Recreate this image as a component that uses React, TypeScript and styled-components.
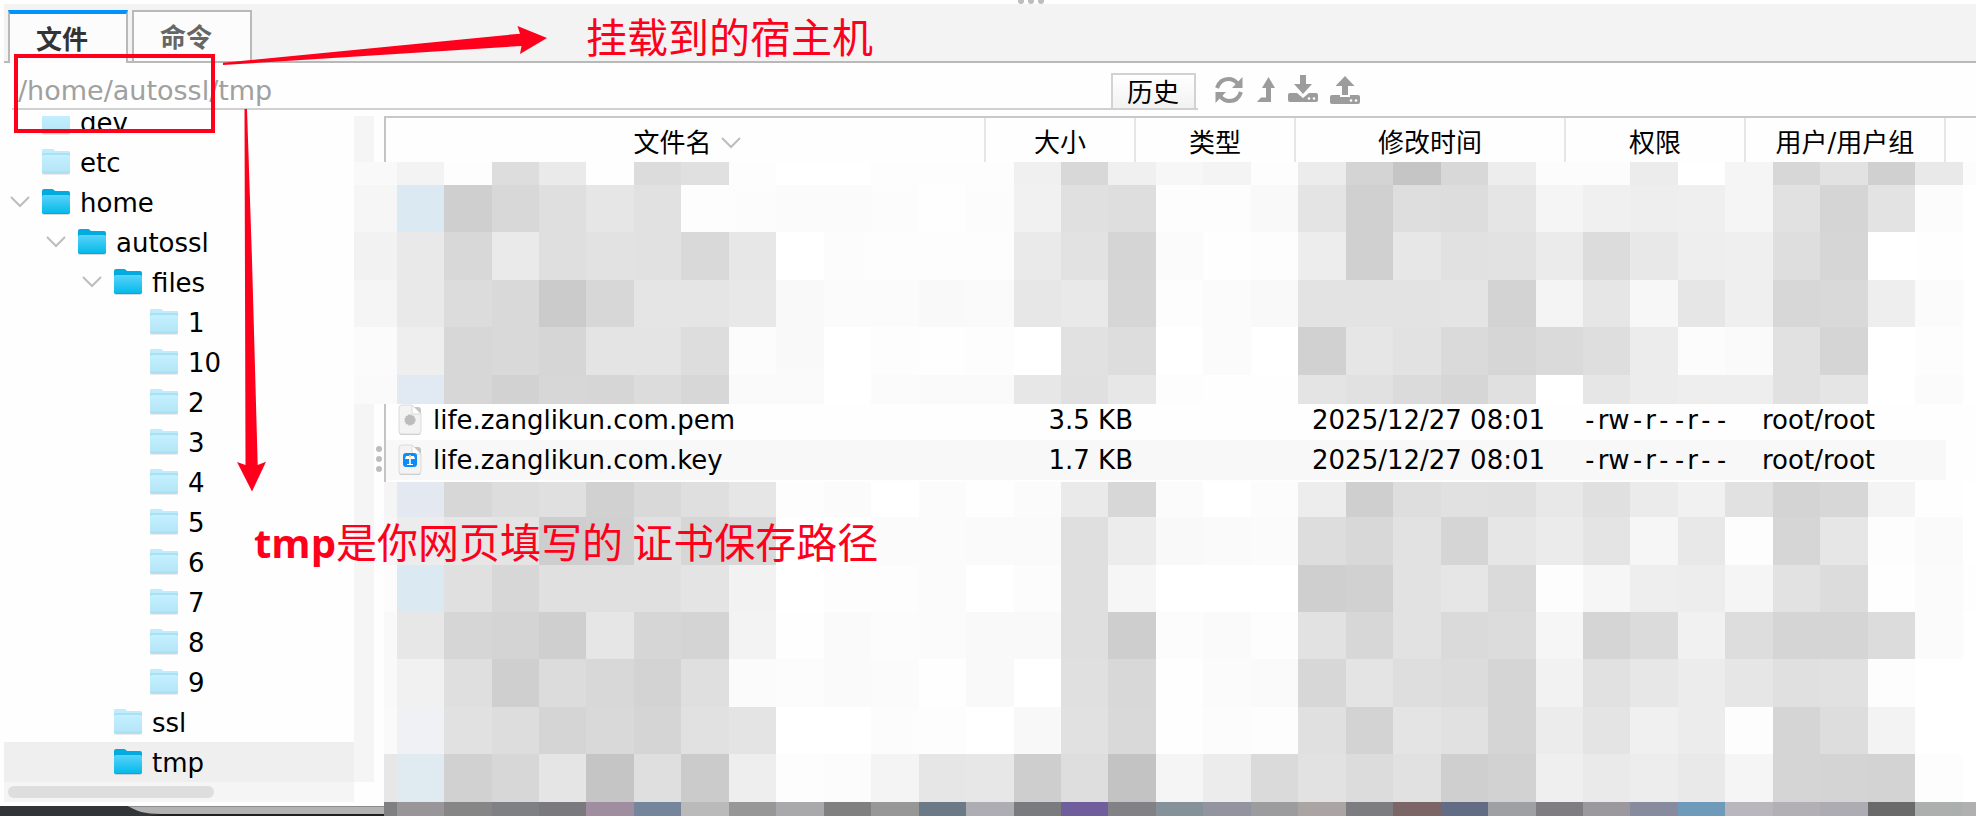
import React from "react";
import styled, { createGlobalStyle } from "styled-components";

const SANS = '"DejaVu Sans", "Noto Sans CJK SC", sans-serif';
const RED = "#ff001c";

const GlobalStyle = createGlobalStyle`
  *, *::before, *::after { box-sizing: border-box; }
  body { margin: 0; background: #fefefe; overflow-x: hidden; }
  button, input { font: inherit; color: inherit; margin: 0; }
`;

const Page = styled.div`
  position: relative;
  display: flex;
  flex-direction: column;
  min-height: 100vh;
  overflow: hidden;
  font-family: ${SANS};
  font-size: 26px;
  color: #000;
`;

const TopSplitter = styled.div`
  display: flex;
  justify-content: center;
  height: 4px;
  padding-left: 86px;
`;

const TabBar = styled.div`
  display: flex;
  gap: 4px;
  height: 59px;
  margin-left: 4px;
  padding: 6px 4px 0;
  background: #f3f3f3;
  border-bottom: 2px solid #b9b9b9;
`;

const Tab = styled.button<{ $active?: boolean }>`
  width: 120px;
  height: ${(p) => (p.$active ? 53 : 51)}px;
  padding: 0 12px 2px 0;
  border: 2px solid #b9b9b9;
  border-top: ${(p) => (p.$active ? "4px solid #0093ff" : "2px solid #b9b9b9")};
  border-bottom: 0;
  background: #fcfcfc;
  font-family: "Noto Sans CJK SC", sans-serif;
  font-weight: 700;
  color: ${(p) => (p.$active ? "#333" : "#666")};
`;

const PathBar = styled.div`
  display: flex;
  height: 53px;
  padding-bottom: 6px;
`;

const PathField = styled.div`
  display: flex;
  align-items: flex-end;
  width: 60%;
  margin-left: 12px;
  padding-right: 2px;
  border-bottom: 2px solid #d0d0d0;
`;

const PathInput = styled.input`
  flex: 1;
  min-width: 0;
  height: 36px;
  padding: 0 6px;
  border: 0;
  outline: 0;
  background: transparent;
  font-size: 27px;
  color: #a0a0a0;
`;

const HistoryButton = styled.button`
  width: 85px;
  height: 35px;
  padding: 2px 0 0;
  border: 2px solid #d2d2d2;
  border-bottom: 0;
  background: linear-gradient(#fff, #f2f2f2);
  line-height: 32px;
`;

const Tools = styled.div`
  display: flex;
  align-items: center;
  gap: 12px;
  padding: 6px 0 0 16px;
`;

const ToolButton = styled.button`
  display: flex;
  padding: 0;
  border: 0;
  background: none;
  color: #9c9c9c;
`;

const Body = styled.div`
  display: flex;
  flex: 1;
`;

const Side = styled.aside`
  display: flex;
  flex-direction: column;
  flex: none;
  width: 384px;
`;

const SideMain = styled.div`
  display: flex;
  height: 690px;
  padding-left: 4px;
`;

const TreePane = styled.div`
  width: 350px;
`;

const Tree = styled.ul`
  display: flex;
  flex-direction: column;
  justify-content: flex-end;
  height: 666px;
  margin: 0;
  padding: 0;
  overflow: hidden;
  list-style: none;
`;

const TreeItem = styled.li<{ $depth: number; $selected?: boolean }>`
  display: flex;
  flex: none;
  align-items: center;
  height: 40px;
  padding-left: ${(p) => p.$depth * 36 - 30}px;
  background: ${(p) => (p.$selected ? "#efefef" : "transparent")};
`;

const Toggle = styled.span`
  display: flex;
  flex: none;
  width: 32px;
`;

const TreeLabel = styled.span`
  padding: 2px 0 0 10px;
`;

const HScroll = styled.div`
  height: 20px;
  padding: 4px;
  background: #f5f5f5;
`;

const Thumb = styled.div`
  width: 206px;
  height: 12px;
  border-radius: 6px;
  background: #dedede;
`;

const Gutter = styled.div`
  width: 20px;
  height: 666px;
  background: #f5f5f5;
`;

const Splitter = styled.div`
  display: flex;
  align-items: center;
  justify-content: center;
  width: 10px;
  height: 686px;
`;

const FilePane = styled.main`
  flex: 1;
  min-width: 0;
  border-top: 2px solid #c8c8c8;
  border-left: 2px solid #c4c4c4;
`;

const FileTable = styled.table`
  width: 100%;
  table-layout: fixed;
  border-collapse: separate;
  border-spacing: 0;
  white-space: nowrap;
`;

const Col = styled.col<{ $width?: number }>`
  width: ${(p) => (p.$width ? `${p.$width}px` : "auto")};
`;

const HeadCell = styled.th`
  height: 44px;
  padding: 6px 0 0;
  border-right: 2px solid #e6e6e6;
  font-weight: 400;
  line-height: 38px;

  &:last-child { border-right: 0; }
`;

const HeadLabel = styled.span`
  display: flex;
  align-items: center;
  justify-content: center;
  gap: 9px;
  padding-left: 4px;
`;

const FileRow = styled.tr<{ $striped?: boolean }>`
  td:not(:last-child) {
    background: ${(p) => (p.$striped ? "#f8f8f8" : "transparent")};
  }
`;

const Cell = styled.td<{ $align?: "right" }>`
  height: 40px;
  padding: ${(p) => (p.$align === "right" ? "0 3px 0 0" : "0 0 0 16px")};
  text-align: ${(p) => p.$align ?? "left"};
  line-height: 40px;
`;

const FileName = styled.div`
  display: flex;
  align-items: center;
  gap: 11px;
  margin-left: -4px;
`;

const Dash = styled.span`
  font-family: "DejaVu Sans Mono", monospace;
`;

const CoverCell = styled.td<{ $top?: number }>`
  position: relative;
  z-index: 1;
  padding: ${(p) => p.$top ?? 0}px 0 0;
`;

const Mosaic = styled.svg<{ $bleed: number; $overlap?: number }>`
  display: block;
  width: calc(100% + ${(p) => p.$bleed}px);
  margin-left: -${(p) => p.$bleed}px;
  margin-bottom: -${(p) => p.$overlap ?? 0}px;
`;

const Notes = styled.div`
  position: absolute;
  inset: 0;
  z-index: 5;
  pointer-events: none;
  color: ${RED};
`;

const NoteArt = styled.svg`
  position: absolute;
  left: 0;
  top: 0;
`;

const NoteText = styled.p<{ $x: number; $y: number }>`
  position: absolute;
  left: ${(p) => p.$x}px;
  top: ${(p) => p.$y}px;
  margin: 0;
  font-family: "Noto Sans CJK SC", sans-serif;
  font-size: 41px;
  line-height: 60px;
  white-space: nowrap;

  strong { font-family: "Open Sans", sans-serif; font-size: 40px; }
`;

const Chevron = () => (
  <svg width="20" height="12" viewBox="0 0 20 12" fill="none" stroke="#bdbdbd" strokeWidth="2">
    <path d="M1 1l9 9 9-9" />
  </svg>
);

function Folder({ open }: { open?: boolean }) {
  return (
    <svg width="28" height="26" viewBox="0 0 28 26">
      <defs>
        <linearGradient id="folderOpen" x1="0" y1="0" x2="0" y2="1">
          <stop offset="0" stopColor="#5ad3fa" />
          <stop offset="1" stopColor="#05baea" />
        </linearGradient>
        <linearGradient id="folderShut" x1="0" y1="0" x2="0" y2="1">
          <stop offset="0" stopColor="#c4efff" />
          <stop offset=".85" stopColor="#b6e7f8" />
          <stop offset="1" stopColor="#a9dcee" />
        </linearGradient>
      </defs>
      <rect x="0" y="4" width="28" height="22" rx="2" fill="#000" opacity={open ? 0.14 : 0.07} />
      <path
        d="M0 2q0-2 2-2h8q1 0 2 1l1 1h13q2 0 2 2v19q0 2-2 2H2q-2 0-2-2z"
        fill={open ? "#00acdf" : "#abe0f3"}
      />
      {!open && <path d="M0 2q0-2 2-2h8q1 0 2 1l1 1h13q2 0 2 2H0z" fill="#c0edfd" />}
      <path
        d="M0 8q0-2 2-2h24q2 0 2 2v15q0 1-2 1H2q-2 0-2-1z"
        fill={open ? "url(#folderOpen)" : "url(#folderShut)"}
      />
    </svg>
  );
}

function FileIcon({ kind }: { kind: "plain" | "key" }) {
  return (
    <svg width="24" height="32" viewBox="0 0 24 32">
      <rect x="1" y="3" width="22" height="28" rx="3" fill="#000" opacity=".22" />
      <path d="M1 4q0-3 3-3h10l9 9v17q0 3-3 3H4q-3 0-3-3z" fill="#f3f3f3" stroke="#dcdcdc" />
      <path d="M14 1v7q0 2 2 2h7z" fill="#fff" stroke="#dadada" />
      {kind === "plain" ? (
        <circle cx="12" cy="16" r="5" fill="#bcbcbc" stroke="#bcbcbc" strokeWidth="1.4" strokeDasharray="1.6 1" />
      ) : (
        <g>
          <rect x="5" y="9" width="14" height="14" rx="3" fill="#0a8dfb" />
          <path d="M7 15h10l-1-3H8z M11.200 15h1.600v5h-1.600z M9 20h6v1H9z" fill="#fff" />
          <path d="M11 11h2v2h-2z" fill="#ffc46b" />
        </g>
      )}
    </svg>
  );
}

const RefreshIcon = () => (
  <svg width="30" height="28" viewBox="0 0 30 28" fill="none" stroke="currentColor" strokeWidth="4">
    <path d="M3 12C5 6 9 3 14.500 3c4 0 7 2 9 4.500" />
    <path d="M27 16c-2 6-6 9-11.500 9-4 0-7-2-9-4.500" />
    <path d="M28.500 1v11H18z" fill="currentColor" stroke="none" />
    <path d="M1.500 27V16H12z" fill="currentColor" stroke="none" />
  </svg>
);

const UpIcon = () => (
  <svg width="20" height="28" viewBox="0 0 20 28" fill="currentColor">
    <path d="M12.500 1L19 12h-4v14H1l4-4.500h5V12H6z" />
  </svg>
);

const TransferIcon = ({ up }: { up?: boolean }) => (
  <svg width="30" height="30" viewBox="0 0 30 30" fill="currentColor">
    <path d={up ? "M15 1l9.500 10h-6.500v9h-6v-9H5.500z" : "M12 0h6v9h6l-9 10-9-10h6z"} />
    <path
      d={
        up
          ? "M2 20h8v2h10v-2h8q2 0 2 2v5q0 2-2 2H2q-2 0-2-2v-5q0-2 2-2z"
          : "M2 18h7l6 5 6-5h7q2 0 2 2v5q0 2-2 2H2q-2 0-2-2v-5q0-2 2-2z"
      }
    />
    <circle cx="21" cy={up ? 25.5 : 23.5} r="1.300" fill="#fff" />
    <circle cx="26" cy={up ? 25.5 : 23.5} r="1.300" fill="#fff" />
  </svg>
);

type Node = { name: string; depth: number; open?: boolean; toggle?: boolean; selected?: boolean };

const nodes: Node[] = [
  { name: "dev", depth: 1 },
  { name: "etc", depth: 1 },
  { name: "home", depth: 1, open: true, toggle: true },
  { name: "autossl", depth: 2, open: true, toggle: true },
  { name: "files", depth: 3, open: true, toggle: true },
  ...["1", "10", "2", "3", "4", "5", "6", "7", "8", "9"].map((name) => ({ name, depth: 4 })),
  { name: "ssl", depth: 3 },
  { name: "tmp", depth: 3, open: true, selected: true },
];

const files = [
  { name: "life.zanglikun.com.pem", kind: "plain" as const, size: "3.5 KB" },
  { name: "life.zanglikun.com.key", kind: "key" as const, size: "1.7 KB" },
];

// Column edges of the redaction mosaic, shared by every band.
const EDGES = [
  354, 397, 444, 492, 539, 586, 634, 681, 729, 776, 824, 871, 919, 966, 1014, 1061, 1108, 1156,
  1203, 1251, 1298, 1346, 1393, 1441, 1488, 1536, 1583, 1630, 1678, 1725, 1773, 1820, 1868, 1915,
  1963, 1976,
];

type Band = { h: number; cells: string };

// Two-digit values are grey levels, six-digit ones are full colours.
const upper: Band[] = [
  { h: 23, cells: "f9 f3 fd dd ea fe dc e0 fd ff ff fd fd fd f0 d8 f0 f7 f4 fd ec d4 c5 d8 ed fc fc ec ff f5 d7 e2 d0 e9 fc" },
  { h: 47, cells: "f6 dbe9f3 cf d8 df e6 e1 fd fc fb fb fc fe fc f1 e0 de fd fd f9 e4 d0 de dd e5 f5 f0 ee ef f5 e1 d5 e3 fc ff" },
  { h: 48, cells: "f2 e9 d8 ea df e2 e1 d9 e7 ff fc fd fd fd ea e2 d5 fb fe fd ed d0 e7 e1 e2 eb dc e8 ee ef de d6 ff fe ff" },
  { h: 47, cells: "f5 e9 dc d9 cb d7 e5 e5 e8 f9 fb fb f9 fa e7 e9 d6 fd fb f9 e3 e3 e3 e4 d3 f4 e6 f7 e6 ef d7 d9 ee fb ff" },
  { h: 48, cells: "fb ee d7 d9 d6 e4 e4 dd fc f9 ff fd fe fd ff e1 dd ff fb ff d1 e6 e2 da d6 da de ec fc fa e1 d5 ff fd ff" },
  { h: 29, cells: "fa e1eaf3 d7 d2 d7 d6 dc d7 fa fa ff fb fa fa e7 e0 e7 fd fe fe e4 e1 db d6 e0 ff e6 ec ee ee e1 e5 ff fb ff" },
];

const lower: Band[] = [
  { h: 35, cells: "f5 e4e9f1 d7 dd e0 d1 d9 df e6 fd fb ff fb fe fb ea d7 fb ff fc ed cf de e1 e0 e8 e0 eb f1 e1 d4 d7 f4 fe ff" },
  { h: 48, cells: "f6 ec e6 e4 ce d0 e1 d6 d8 ff fe fb fb fa fa df ec f9 fa fb dd d8 e2 d5 e6 eb e4 f6 e8 fd d6 e6 fd fa ff" },
  { h: 47, cells: "fc dbe9f3 e0 d7 e0 e0 e0 e4 f2 ff fd fd fb ff fc df f6 ff ff ff cf d1 e2 e6 da fd f6 ee ed f5 e2 dc fe fb fe" },
  { h: 47, cells: "f9 e7 d6 d4 cf e6 d6 d4 f3 fe fa fc fb f9 f9 df ce fc fa fd e2 d7 e2 da dc f6 d5 db f1 dd d5 d5 dc fb ff" },
  { h: 48, cells: "f9 f1 df cf dc d8 d3 df fb fc fa fb fe f9 ff e0 d8 fe fb fa d7 e4 de dc d5 f2 e1 e7 ec e6 e0 e1 fd ff ff" },
  { h: 47, cells: "fa f0f1f4 e1 dd d5 d9 d5 e1 e4 ff ff fc fd ff f8 e1 d9 fe fc fd e0 d3 e4 e1 d5 ec e4 f0 ec fd d5 dd f3 ff ff" },
  { h: 48, cells: "e7 e0ebf1 d1 d7 e5 c5 df cb ee fd fc f4 e6 e7 ce de c3 f5 ec da e2 dc e1 cf d2 ef ea ed e9 f5 d5 d4 d3 fd ff" },
  { h: 14, cells: "808082 9a9598 868686 7f8084 7a797e a08ea0 75859b bababa 979798 a9a9ab 808081 979798 6c7a88 aeadb3 7a7b7f 6f5e9b 828186 869299 9294a0 9c9c9e aaa5a2 7d7c80 7b6567 626c84 9fa0a3 7f7d82 9b999e 878b9d 6f9bbb b9b7bd b3b0b5 adacb2 6a6a6b abb0ae b0b0b1" },
];

function Redaction({ bands, from, bleed, overlap }: { bands: Band[]; from: number; bleed: number; overlap?: number }) {
  const total = bands.reduce((sum, b) => sum + b.h, 0);
  let y = 0;
  const rects: React.ReactNode[] = [];
  bands.forEach((band, r) => {
    band.cells.split(" ").forEach((c, i) => {
      const x = Math.max(EDGES[i], from);
      rects.push(
        <rect
          key={`${r}-${i}`}
          x={x}
          y={y}
          width={EDGES[i + 1] - x}
          height={band.h}
          fill={`#${c.length === 2 ? c + c + c : c}`}
        />
      );
    });
    y += band.h;
  });
  return (
    <Mosaic
      $bleed={bleed}
      $overlap={overlap}
      height={total}
      viewBox={`${from} 0 ${1976 - from} ${total}`}
      preserveAspectRatio="none"
      shapeRendering="crispEdges"
      aria-hidden="true"
    >
      {rects}
    </Mosaic>
  );
}

const Permissions = ({ value }: { value: string }) => (
  <>
    {value.split(/(-+)/).map((part, i) => (part.startsWith("-") ? <Dash key={i}>{part}</Dash> : part))}
  </>
);

export default function App() {
  return (
    <Page>
      <GlobalStyle />
      <TopSplitter>
        <svg width="26" height="4" viewBox="0 0 26 4" fill="#bdbdbd">
          <circle cx="3" cy="1" r="3" />
          <circle cx="13" cy="1" r="3" />
          <circle cx="23" cy="1" r="3" />
        </svg>
      </TopSplitter>

      <TabBar role="tablist">
        <Tab role="tab" aria-selected="true" $active>文件</Tab>
        <Tab role="tab" aria-selected="false">命令</Tab>
      </TabBar>

      <PathBar>
        <PathField>
          <PathInput aria-label="路径" defaultValue="/home/autossl/tmp" />
          <HistoryButton>历史</HistoryButton>
        </PathField>
        <Tools>
          <ToolButton aria-label="刷新"><RefreshIcon /></ToolButton>
          <ToolButton aria-label="上级目录"><UpIcon /></ToolButton>
          <ToolButton aria-label="下载"><TransferIcon /></ToolButton>
          <ToolButton aria-label="上传"><TransferIcon up /></ToolButton>
        </Tools>
      </PathBar>

      <Body>
        <Side>
          <SideMain>
            <TreePane>
              <Tree>
                {nodes.map((n) => (
                  <TreeItem key={n.name} $depth={n.depth} $selected={n.selected}>
                    <Toggle>{n.toggle && <Chevron />}</Toggle>
                    <Folder open={n.open} />
                    <TreeLabel>{n.name}</TreeLabel>
                  </TreeItem>
                ))}
              </Tree>
              <HScroll><Thumb /></HScroll>
            </TreePane>
            <Gutter />
            <Splitter>
              <svg width="6" height="26" viewBox="0 0 6 26" fill="#bdbdbd">
                <circle cx="3" cy="3" r="3" />
                <circle cx="3" cy="13" r="3" />
                <circle cx="3" cy="23" r="3" />
              </svg>
            </Splitter>
          </SideMain>
          <svg width="384" height="10" viewBox="0 0 384 10">
            <rect width="384" height="10" fill="#333437" />
            <path d="M128 0c8 5 16 8 34 8h222V0z" fill="#b3b3b3" />
            <path d="M128 0h256v1H130z" fill="#8c8c8c" />
            <path d="M162 8h222v2H150z" fill="#202123" />
          </svg>
        </Side>

        <FilePane>
          <FileTable>
            <colgroup>
              <Col />
              <Col $width={150} />
              <Col $width={160} />
              <Col $width={270} />
              <Col $width={180} />
              <Col $width={200} />
              <Col $width={30} />
            </colgroup>
            <thead>
              <tr>
                <HeadCell><HeadLabel>文件名<Chevron /></HeadLabel></HeadCell>
                <HeadCell>大小</HeadCell>
                <HeadCell>类型</HeadCell>
                <HeadCell>修改时间</HeadCell>
                <HeadCell>权限</HeadCell>
                <HeadCell>用户/用户组</HeadCell>
                <HeadCell />
              </tr>
            </thead>
            <tbody>
              <tr>
                <CoverCell colSpan={7}>
                  <Redaction bands={upper} from={354} bleed={32} overlap={4} />
                </CoverCell>
              </tr>
              {files.map((f, i) => (
                <FileRow key={f.name} $striped={i % 2 === 1}>
                  <Cell>
                    <FileName><FileIcon kind={f.kind} />{f.name}</FileName>
                  </Cell>
                  <Cell $align="right">{f.size}</Cell>
                  <Cell />
                  <Cell>2025/12/27 08:01</Cell>
                  <Cell><Permissions value="-rw-r--r--" /></Cell>
                  <Cell>root/root</Cell>
                  <Cell />
                </FileRow>
              ))}
              <tr>
                <CoverCell colSpan={7} $top={2}>
                  <Redaction bands={lower} from={384} bleed={2} />
                </CoverCell>
              </tr>
            </tbody>
          </FileTable>
        </FilePane>
      </Body>

      <Notes>
        <NoteArt width="560" height="500" viewBox="0 0 560 500" fill={RED}>
          <rect x="16" y="56" width="197" height="75" fill="none" stroke={RED} strokeWidth="4" />
          <path d="M223 62.700L520 33.700 517.500 26 547 38 520 54 521.500 46 223 65z" />
          <path d="M244.500 109h2.500L252 260 257.700 465 266 461.700 252 491.500 237 462 245.500 465z" />
        </NoteArt>
        <NoteText $x={586} $y={5}>挂载到的宿主机</NoteText>
        <NoteText $x={254} $y={510}><strong>tmp</strong>是你网页填写的 证书保存路径</NoteText>
      </Notes>
    </Page>
  );
}
